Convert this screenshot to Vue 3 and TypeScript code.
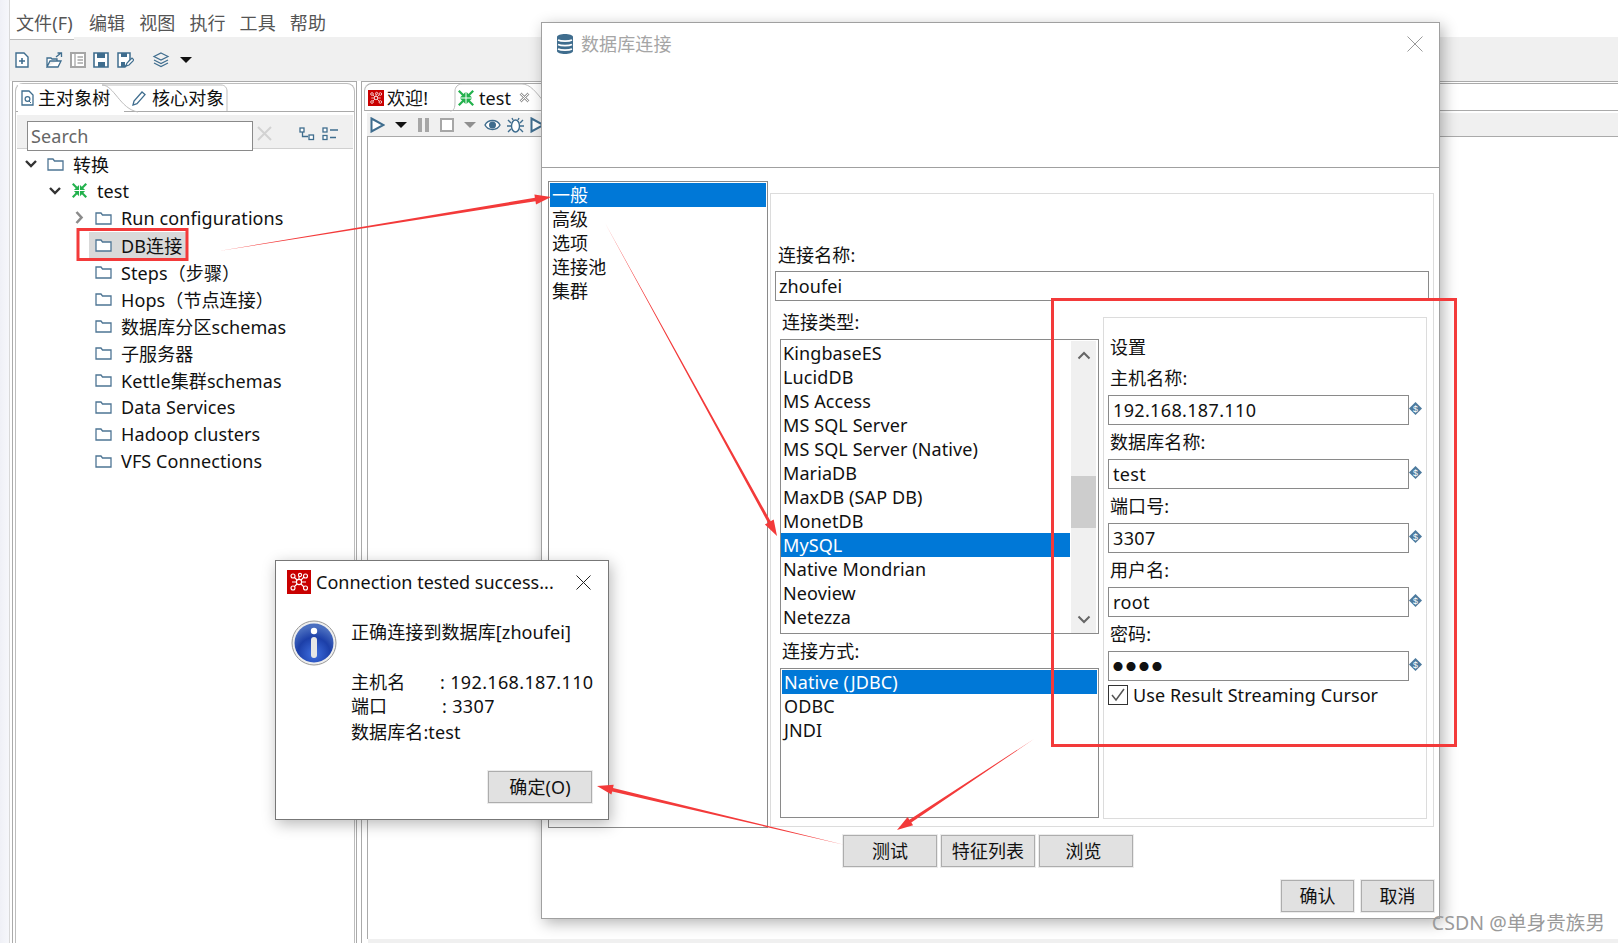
<script setup lang="ts">
const menus = ['文件(F)', '编辑', '视图', '执行', '工具', '帮助']
const tree = [
  { t: '转换', d: 'd0', tw: 'open', ic: 'folder' },
  { t: 'test', d: 'd1', tw: 'open', ic: 'trans' },
  { t: 'Run configurations', d: 'd2', tw: 'closed', ic: 'folder' },
  { t: 'DB连接', d: 'd2', tw: '', ic: 'folder', sel: true },
  { t: 'Steps（步骤）', d: 'd2', tw: '', ic: 'folder' },
  { t: 'Hops（节点连接）', d: 'd2', tw: '', ic: 'folder' },
  { t: '数据库分区schemas', d: 'd2', tw: '', ic: 'folder' },
  { t: '子服务器', d: 'd2', tw: '', ic: 'folder' },
  { t: 'Kettle集群schemas', d: 'd2', tw: '', ic: 'folder' },
  { t: 'Data Services', d: 'd2', tw: '', ic: 'folder' },
  { t: 'Hadoop clusters', d: 'd2', tw: '', ic: 'folder' },
  { t: 'VFS Connections', d: 'd2', tw: '', ic: 'folder' },
]
const navs = ['一般', '高级', '选项', '连接池', '集群']
const types = ['KingbaseES', 'LucidDB', 'MS Access', 'MS SQL Server', 'MS SQL Server (Native)', 'MariaDB', 'MaxDB (SAP DB)', 'MonetDB', 'MySQL', 'Native Mondrian', 'Neoview', 'Netezza']
const methods = ['Native (JDBC)', 'ODBC', 'JNDI']
const fields = [
  { l: '主机名称:', v: '192.168.187.110' },
  { l: '数据库名称:', v: 'test' },
  { l: '端口号:', v: '3307' },
  { l: '用户名:', v: 'root' },
  { l: '密码:', v: '●●●●', pw: true },
]
function arrow(x1: number, y1: number, x2: number, y2: number, w: number, hl: number, hw: number): string {
  const len = Math.hypot(x2 - x1, y2 - y1)
  const ux = (x2 - x1) / len
  const uy = (y2 - y1) / len
  const nx = -uy
  const ny = ux
  const bx = x2 - ux * hl
  const by = y2 - uy * hl
  const pts: [number, number][] = [
    [x1, y1],
    [bx + (nx * w) / 2, by + (ny * w) / 2],
    [bx + nx * hw, by + ny * hw],
    [x2, y2],
    [bx - nx * hw, by - ny * hw],
    [bx - (nx * w) / 2, by - (ny * w) / 2],
  ]
  return pts.map((p) => p[0].toFixed(1) + ',' + p[1].toFixed(1)).join(' ')
}
const arrows = [
  arrow(219, 251, 551, 197, 3.5, 16, 5),
  arrow(605, 223, 777, 536, 3, 16, 5),
  arrow(1034, 739, 897, 830, 3.5, 16, 5),
  arrow(845, 845, 597, 786, 3.5, 16, 5),
]
</script>

<template>
  <div class="desk">
    <svg class="defs" width="0" height="0">
      <defs>
        <symbol id="folder" viewBox="0 0 17 14">
          <path d="M1 2.500h5l1.500 2H16v9H1z" fill="#fff" stroke="#4e7594" stroke-width="1.300" />
        </symbol>
        <g id="corner">
          <path d="M7.500 7.500H2L7.500 2z" fill="#22b14c" />
          <path d="M.8.800l4.500 4.500" stroke="#22b14c" stroke-width="2.200" />
        </g>
        <symbol id="trans" viewBox="0 0 16 16">
          <use href="#corner" />
          <use href="#corner" transform="translate(16 0) scale(-1 1)" />
          <use href="#corner" transform="translate(0 16) scale(1 -1)" />
          <use href="#corner" transform="translate(16 16) scale(-1 -1)" />
        </symbol>
        <symbol id="logo" viewBox="0 0 24 24">
          <rect width="24" height="24" fill="#c90000" />
          <g stroke="#fff" stroke-width="1.100" fill="#c90000">
            <path d="M6 6l6 6M12 5v7M18 6l-6 6M6 18l6-6M18 18l-6-6M5 12h14" fill="none" />
            <circle cx="6" cy="6" r="2" />
            <circle cx="13" cy="5" r="1.600" />
            <circle cx="18.500" cy="6" r="2" />
            <circle cx="12" cy="12" r="2.600" />
            <circle cx="6" cy="18" r="2" />
            <circle cx="18.500" cy="18" r="2" />
          </g>
        </symbol>
        <symbol id="var" viewBox="0 0 14 14">
          <path d="M7 0l7 7-7 7-7-7z" fill="#4d7a9e" />
          <text x="7" y="10.400" font-size="9.500" font-family="Liberation Sans" fill="#fff" text-anchor="middle">$</text>
        </symbol>
      </defs>
    </svg>

    <div class="main">
      <div class="menu">
        <span v-for="m in menus" :key="m" class="menu-item">{{ m }}</span>
      </div>
      <div class="toolbar">
        <svg width="14" height="16" viewBox="0 0 14 16"><path d="M1 1h8l4 4v10H1z" fill="#fff" stroke="#3f6d8e" stroke-width="1.400" /><path d="M7 6v6M4 9h6" stroke="#3f6d8e" stroke-width="1.600" /></svg>
        <svg class="t2" width="17" height="16" viewBox="0 0 17 16"><path d="M1 15V6h4l1 1h5v2M1 15h11l3-6H4z" fill="#fff" stroke="#3f6d8e" stroke-width="1.300" /><path d="M10 5l5-4M11.500 1H15.500V5" fill="none" stroke="#3f6d8e" stroke-width="1.300" /></svg>
        <svg class="t3" width="16" height="16" viewBox="0 0 16 16"><rect x="1" y="1" width="14" height="14" fill="#fff" stroke="#a6a6a6" stroke-width="2" /><path d="M5 1v14M7.500 5H13M7.500 8H13M7.500 11H13" stroke="#a6a6a6" stroke-width="1.300" /></svg>
        <svg class="t3" width="16" height="16" viewBox="0 0 16 16"><path d="M1 1h14v14H1z" fill="#fff" stroke="#3f6d8e" stroke-width="1.600" /><path d="M4 1h8v5H4zM5 10h7v5H5z" fill="#3f6d8e" /></svg>
        <svg class="t3b" width="17" height="16" viewBox="0 0 17 16"><path d="M1 1h12v7l-5 7H1z" fill="#fff" stroke="#3f6d8e" stroke-width="1.500" /><path d="M4 1h6v4H4zM4 10h4v5H4z" fill="#3f6d8e" /><path d="M9 14l1-3 5-5 2 2-5 5z" fill="#fff" stroke="#3f6d8e" stroke-width="1.200" /></svg>
        <svg class="t4" width="18" height="16" viewBox="0 0 18 16"><g fill="none" stroke="#3f6d8e" stroke-width="1.200"><path d="M9 1l7 3.500L9 8 2 4.500z" /><path d="M2 8l7 3.500L16 8" /><path d="M2 11l7 3.500 7-3.500" /></g></svg>
        <span class="tri t5"></span>
      </div>

      <div class="panes">
        <section class="pane-left">
          <div class="frame">
            <div class="tabs">
              <div class="tab tab-a">
                <svg width="13" height="16" viewBox="0 0 13 16"><path d="M1 1h7l4 4v10H1z" fill="#fff" stroke="#3f6d8e" stroke-width="1.300" /><circle cx="6.500" cy="9" r="2.400" fill="none" stroke="#3f6d8e" stroke-width="1.200" /><path d="M8 11l2 2" stroke="#3f6d8e" /></svg>
                <span>主对象树</span>
              </div>
              <div class="tab tab-b">
                <svg width="15" height="16" viewBox="0 0 15 16"><path d="M1 15l1-4 8-9 3 2.600-8 9z" fill="#fff" stroke="#3f6d8e" stroke-width="1.300" /></svg>
                <span>核心对象</span>
              </div>
              <svg class="tab-curve" width="240" height="29" viewBox="0 0 240 29"><path d="M86 1c12 0 18 24 36 27M86 1h119c4 0 6 3 6 6v20" fill="none" stroke="#bdbdbd" stroke-width="1" /></svg>
            </div>
            <div class="tree-bar">
              <div class="search">Search</div>
              <svg class="sx" width="15" height="15" viewBox="0 0 15 15"><path d="M1 1l13 13M14 1L1 14" stroke="#d2d2d2" stroke-width="2" /></svg>
              <svg class="sy" width="16" height="14" viewBox="0 0 16 14"><g fill="#fff" stroke="#3f6d8e" stroke-width="1.300"><path d="M3.500 4v5.500H9" fill="none" /><rect x="1" y="1" width="4" height="4" /><rect x="10" y="8" width="4.500" height="4.500" /></g></svg>
              <svg class="sz" width="17" height="14" viewBox="0 0 17 14"><g fill="#fff" stroke="#3f6d8e" stroke-width="1.300"><rect x="1" y="1" width="4" height="4" /><rect x="1" y="8.500" width="4" height="4" /><path d="M8 3h8M8 10.500h6" /></g></svg>
            </div>
            <div class="tree">
              <div v-for="r in tree" :key="r.t" class="row" :class="r.d">
                <span class="twist">
                  <svg v-if="r.tw === 'open'" width="12" height="8" viewBox="0 0 12 8"><path d="M1 1l5 5 5-5" fill="none" stroke="#333" stroke-width="2.400" /></svg>
                  <svg v-else-if="r.tw === 'closed'" width="9" height="13" viewBox="0 0 9 13"><path d="M1.500 1l5 5.500-5 5.500" fill="none" stroke="#8b8b8b" stroke-width="2.600" /></svg>
                </span>
                <span class="node" :class="{ sel: r.sel }">
                  <svg class="nic" width="17" height="15"><use :href="'#' + r.ic" /></svg>
                  <span>{{ r.t }}</span>
                </span>
              </div>
            </div>
          </div>
        </section>

        <section class="pane-right">
          <div class="tabs2">
            <div class="tab2 welcome">
              <svg width="16" height="16"><use href="#logo" /></svg>
              <span>欢迎!</span>
            </div>
            <div class="tab2 active">
              <svg width="16" height="16"><use href="#trans" /></svg>
              <span>test</span>
              <svg class="tclose" width="11" height="11" viewBox="0 0 11 11"><path d="M1.500 1.500l8 8M9.500 1.500l-8 8" stroke="#999" stroke-width="2.600" /><path d="M1.500 1.500l8 8M9.500 1.500l-8 8" stroke="#fff" stroke-width="1" /></svg>
            </div>
            <svg class="tab-curve2" width="110" height="29" viewBox="0 0 110 29"><path d="M0 28c4 0 5-3 5-9V8c0-4 3-7 7-7h60c8 0 14 8 22 18" fill="none" stroke="#bdbdbd" /></svg>
          </div>
          <div class="run-bar">
            <svg class="r1" width="15" height="16" viewBox="0 0 15 16"><path d="M1.500 1.500l12 6.500-12 6.500z" fill="#fff" stroke="#3f6d8e" stroke-width="2" /></svg>
            <span class="tri r2"></span>
            <svg class="r3" width="11" height="14" viewBox="0 0 11 14"><path d="M0 0h4v14H0zM7 0h4v14H7z" fill="#a6a6a6" /></svg>
            <svg class="r4" width="14" height="14" viewBox="0 0 14 14"><rect x="1" y="1" width="12" height="12" fill="#fff" stroke="#a6a6a6" stroke-width="2" /></svg>
            <span class="tri gray r5"></span>
            <svg class="r6" width="17" height="12" viewBox="0 0 17 12"><path d="M1 6c3-6 12-6 15 0-3 6-12 6-15 0z" fill="#fff" stroke="#3f6d8e" stroke-width="1.400" /><circle cx="8.500" cy="6" r="3.500" fill="#3f6d8e" /></svg>
            <svg class="r7" width="17" height="16" viewBox="0 0 17 16"><g stroke="#3f6d8e" stroke-width="1.400" fill="none"><ellipse cx="8.500" cy="9" rx="4" ry="6" fill="#fff" /><path d="M4 6L1 3M13 6l3-3M4 9H0M13 9h4M4 12l-3 3M13 12l3 3M6 3L5 1M11 3l1-2" /></g></svg>
            <svg class="r8" width="15" height="16" viewBox="0 0 15 16"><path d="M1.500 1.500l12 6.500-12 6.500z" fill="#fff" stroke="#3f6d8e" stroke-width="2" /></svg>
          </div>
          <div class="canvas"></div>
          <div class="status"></div>
        </section>
      </div>
    </div>

    <div class="dialog">
      <header class="dlg-head">
        <div class="dlg-title">
          <svg width="18" height="22" viewBox="0 0 18 22"><path d="M1 4c0-4 16-4 16 0v14c0 4-16 4-16 0z" fill="#3f6d8e" /><path d="M2 7c3 1.500 11 1.500 14 0M2 11.500c3 1.500 11 1.500 14 0M2 16c3 1.500 11 1.500 14 0" fill="none" stroke="#fff" stroke-width="1.600" /></svg>
          <span>数据库连接</span>
        </div>
        <svg class="dlg-x" width="16" height="16" viewBox="0 0 16 16"><path d="M.5.500l15 15M15.500.500l-15 15" stroke="#9a9a9a" stroke-width="1" /></svg>
      </header>
      <div class="dlg-body">
        <div class="nav">
          <div v-for="(n, i) in navs" :key="n" class="li" :class="{ on: i === 0 }">{{ n }}</div>
        </div>
        <div class="group">
          <div class="name-label">连接名称:</div>
          <div class="input name-input">zhoufei</div>
          <div class="split">
            <div class="col">
              <div class="lab-a">连接类型:</div>
              <div class="types">
                <div class="types-list">
                  <div v-for="t in types" :key="t" class="li" :class="{ on: t === 'MySQL' }">{{ t }}</div>
                </div>
                <div class="scroll">
                  <svg class="sup" width="14" height="9" viewBox="0 0 14 9"><path d="M1.500 7.500L7 2l5.500 5.500" fill="none" stroke="#666" stroke-width="2" /></svg>
                  <div class="thumb"></div>
                  <svg class="sdown" width="14" height="9" viewBox="0 0 14 9"><path d="M1.500 1.500L7 7l5.500-5.500" fill="none" stroke="#666" stroke-width="2" /></svg>
                </div>
              </div>
              <div class="lab-b">连接方式:</div>
              <div class="methods">
                <div v-for="(t, i) in methods" :key="t" class="li" :class="{ on: i === 0 }">{{ t }}</div>
              </div>
            </div>
            <div class="settings">
              <div class="set-title">设置</div>
              <div v-for="f in fields" :key="f.l" class="field">
                <div class="field-label">{{ f.l }}</div>
                <div class="field-row">
                  <div class="input field-input" :class="{ pw: f.pw }">{{ f.v }}</div>
                  <svg class="var" width="13" height="13"><use href="#var" /></svg>
                </div>
              </div>
              <label class="check">
                <span class="box"><svg width="16" height="14" viewBox="0 0 16 14"><path d="M2 7l4 5 8-11" fill="none" stroke="#555" stroke-width="1.500" /></svg></span>
                <span>Use Result Streaming Cursor</span>
              </label>
            </div>
          </div>
        </div>
      </div>
      <div class="test-row">
        <button class="btn">测试</button>
        <button class="btn">特征列表</button>
        <button class="btn browse">浏览</button>
      </div>
      <div class="ok-row">
        <button class="btn small">确认</button>
        <button class="btn small">取消</button>
      </div>
    </div>

    <div class="msg">
      <header class="msg-head">
        <svg width="24" height="24"><use href="#logo" /></svg>
        <span>Connection tested success...</span>
        <svg class="msg-x" width="15" height="15" viewBox="0 0 15 15"><path d="M.5.500l14 14M14.500.500l-14 14" stroke="#222" stroke-width="1" /></svg>
      </header>
      <div class="msg-body">
        <svg class="info" width="46" height="46" viewBox="0 0 46 46">
          <defs>
            <radialGradient id="ig" cx="50%" cy="78%" r="70%">
              <stop offset="0" stop-color="#3f6fe0" />
              <stop offset="0.6" stop-color="#1c3fa8" />
              <stop offset="1" stop-color="#4b6fc0" />
            </radialGradient>
          </defs>
          <circle cx="23" cy="23" r="22" fill="#eee" stroke="#999" />
          <circle cx="23" cy="23" r="19.500" fill="url(#ig)" />
          <circle cx="23" cy="11" r="3.200" fill="#fff" />
          <rect x="20" y="17" width="6" height="21" rx="3" fill="#e6e6e6" />
        </svg>
        <div class="msg-text">
          <div class="m-first">正确连接到数据库[zhoufei]</div>
          <div class="m-line"><span class="k">主机名</span><span class="val">: 192.168.187.110</span></div>
          <div class="m-line"><span class="k k2">端口</span><span class="val">: 3307</span></div>
          <div class="m-line m-last">数据库名:test</div>
        </div>
      </div>
      <div class="msg-foot"><button class="btn msg-btn">确定(O)</button></div>
    </div>

    <svg class="marks" width="1618" height="943" viewBox="0 0 1618 943">
      <rect x="78" y="229.500" width="109" height="30" fill="none" stroke="#f33a3a" stroke-width="3" />
      <rect x="1052.500" y="299.500" width="403" height="446" fill="none" stroke="#f33a3a" stroke-width="3" />
      <polygon v-for="(p, i) in arrows" :key="i" :points="p" fill="#f33a3a" />
    </svg>

    <div class="watermark">CSDN @单身贵族男</div>
  </div>
</template>

<style scoped>
.desk {
  position: relative;
  width: 1618px;
  height: 943px;
  overflow: hidden;
  background: linear-gradient(90deg, #eff0f6, #f6f7fb 9px, #fff 9px);
  font-family: "Noto Sans", "Noto Sans CJK SC", sans-serif;
  font-size: 18px;
  letter-spacing: 0.1px;
  color: #111;
}
.defs { position: absolute; }
.main {
  margin-left: 9px;
  height: 943px;
  display: flex;
  flex-direction: column;
  background: #fff;
  border-left: 1px solid #d8d8d8;
}
.menu {
  height: 37px;
  display: flex;
  gap: 14px;
  padding: 11px 0 0 6px;
  box-sizing: border-box;
  line-height: 24px;
  color: #555;
  position: relative;
}
.menu-item:first-child { min-width: 59px; }
.menu::after {
  content: "";
  position: absolute;
  left: 0;
  top: 37px;
  width: 64px;
  height: 2px;
  background: #fff;
  border-bottom: 1px solid #bbb;
}
.toolbar {
  height: 44px;
  background: #f0f0f0;
  display: flex;
  align-items: center;
  padding-left: 5px;
  padding-top: 2px;
  box-sizing: border-box;
}
.t2 { margin-left: 17px; }
.t3 { margin-left: 7px; }
.t3b { margin-left: 8px; }
.t4 { margin-left: 18px; }
.t5 { margin-left: 10px; }
.tri {
  display: inline-block;
  width: 0;
  height: 0;
  border-left: 6px solid transparent;
  border-right: 6px solid transparent;
  border-top: 6px solid #111;
}
.tri.gray { border-top-color: #8f8f8f; }
.panes {
  flex: 1;
  display: flex;
  min-height: 0;
}
.pane-left {
  margin-left: 2px;
  width: 345px;
  border: 1px solid #aaa;
  border-bottom: 0;
  box-sizing: border-box;
  padding: 1px 1px 0 2px;
  display: flex;
}
.frame {
  flex: 1;
  border: 1px solid #bdbdbd;
  border-bottom: 0;
  border-radius: 8px 8px 0 0;
  min-width: 0;
}
.tabs {
  position: relative;
  height: 27px;
  border-bottom: 1px solid #aaa;
  display: flex;
  box-sizing: content-box;
}
.tab {
  display: flex;
  align-items: center;
  line-height: 26px;
  color: #111;
}
.tab-a {
  margin: 0 0 -1px 2px;
  padding-left: 3px;
  width: 106px;
  box-sizing: border-box;
  gap: 4px;
  background: #fff;
}
.tab-b { margin-left: 8px; gap: 5px; }
.tab-curve {
  position: absolute;
  left: 0;
  top: 0;
}
.tree-bar {
  margin: 3px 1px 0 1px;
  height: 33px;
  background: #f0f0f0;
  border-bottom: 1px solid #d0d0d0;
  display: flex;
  align-items: flex-start;
  box-sizing: content-box;
}
.search {
  margin: 6px 0 0 10px;
  width: 226px;
  height: 30px;
  box-sizing: border-box;
  border: 1px solid #8a8a8a;
  background: #fff;
  padding-left: 3px;
  line-height: 28px;
  color: #666;
}
.sx { margin: 11px 0 0 4px; }
.sy { margin: 12px 0 0 27px; }
.sz { margin: 12px 0 0 7px; }
.tree { margin-top: 1px; }
.row {
  height: 27px;
  display: flex;
  align-items: center;
  white-space: nowrap;
}
.d0 { padding-left: 9px; }
.d1 { padding-left: 33px; }
.d2 { padding-left: 57px; }
.twist {
  width: 12px;
  margin-right: 4px;
  display: flex;
  align-items: center;
  justify-content: center;
}
.node {
  display: flex;
  align-items: center;
  height: 26px;
  padding: 0 4px 0 6px;
  gap: 9px;
}
.nic { flex: none; }
.node.sel { background: #d9d9d9; }
.pane-right {
  flex: 1;
  margin-left: 4px;
  min-width: 0;
  display: flex;
  flex-direction: column;
  border-left: 1px solid #aaa;
  border-top: 1px solid #aaa;
  padding-top: 1px;
  position: relative;
}
.tabs2 {
  position: relative;
  height: 28px;
  margin-left: 2px;
  border-top: 1px solid #aaa;
  border-bottom: 1px solid #aaa;
  border-left: 1px solid #bdbdbd;
  border-top-left-radius: 8px;
  display: flex;
  box-sizing: border-box;
}
.tab2 {
  display: flex;
  align-items: center;
  gap: 3px;
  line-height: 26px;
  padding-top: 1px;
}
.welcome { margin-left: 3px; width: 90px; }
.active { margin-left: 0; gap: 5px; }
.tclose { margin-left: 3px; }
.tab-curve2 {
  position: absolute;
  left: 85px;
  top: -1px;
}
.run-bar {
  margin: 2px 0 0 5px;
  height: 22px;
  padding-top: 1px;
  background: #f0f0f0;
  border-bottom: 1px solid #aaa;
  display: flex;
  align-items: center;
  box-sizing: content-box;
}
.r1 { margin-left: 3px; }
.r2 { margin-left: 10px; }
.r3 { margin-left: 11px; }
.r4 { margin-left: 11px; }
.r5 { margin-left: 10px; }
.r6 { margin-left: 8px; }
.r7 { margin-left: 6px; }
.r8 { margin-left: 6px; }
.canvas {
  flex: 1;
  margin-left: 5px;
  border-left: 1px solid #aaa;
}
.status {
  height: 4px;
  margin-left: 6px;
  background: #f0f0f0;
}

.dialog {
  position: absolute;
  left: 541px;
  top: 22px;
  width: 899px;
  height: 897px;
  box-sizing: border-box;
  background: #fff;
  border: 1px solid #a0a0a0;
  box-shadow: 3px 4px 14px rgba(0, 0, 0, 0.3);
  display: flex;
  flex-direction: column;
}
.dlg-head {
  height: 145px;
  flex: none;
  box-sizing: border-box;
  border-bottom: 1px solid #a0a0a0;
  position: relative;
}
.dlg-title {
  display: flex;
  align-items: center;
  gap: 7px;
  padding: 9px 0 0 14px;
  color: #a5a5a5;
  line-height: 24px;
}
.dlg-x {
  position: absolute;
  right: 16px;
  top: 13px;
}
.dlg-body {
  flex: none;
  display: flex;
  gap: 2px;
  padding: 13px 0 0 6px;
  align-items: flex-start;
}
.nav {
  width: 220px;
  height: 647px;
  box-sizing: border-box;
  border: 1px solid #8a8a8a;
  padding: 1px;
  background: #fff;
}
.li {
  height: 24px;
  line-height: 24px;
  padding-left: 2px;
  white-space: nowrap;
}
.li.on {
  background: #0078d7;
  color: #fff;
}
.group {
  margin-top: 12px;
  width: 664px;
  height: 634px;
  box-sizing: border-box;
  border: 1px solid #dcdcdc;
}
.name-label {
  margin-top: 47px;
  padding-left: 7px;
  line-height: 28px;
  height: 30px;
}
.input {
  box-sizing: border-box;
  height: 30px;
  border: 1px solid #8a8a8a;
  background: #fff;
  line-height: 28px;
  padding-left: 3px;
  white-space: nowrap;
}
.name-input {
  margin-left: 4px;
  width: 654px;
}
.split {
  display: flex;
  gap: 4px;
  margin-left: 9px;
}
.col { width: 319px; }
.lab-a {
  padding: 9px 0 5px 2px;
  line-height: 24px;
}
.lab-b {
  padding: 5px 0 5px 2px;
  line-height: 24px;
}
.types {
  height: 295px;
  box-sizing: border-box;
  border: 1px solid #8a8a8a;
  display: flex;
  padding: 1px 2px 0 0;
}
.types-list { flex: 1; min-width: 0; }
.scroll {
  width: 25px;
  flex: none;
  background: #f0f0f0;
  position: relative;
  margin-left: 1px;
  display: flex;
  flex-direction: column;
  align-items: center;
}
.sup { margin-top: 10px; }
.thumb {
  width: 100%;
  height: 52px;
  background: #cdcdcd;
  margin-top: 116px;
}
.sdown { margin-top: 87px; }
.methods {
  height: 150px;
  box-sizing: border-box;
  border: 1px solid #8a8a8a;
  padding: 1px 1px 0;
}
.methods .li { padding-left: 2px; }
.settings {
  margin-top: 16px;
  width: 324px;
  height: 502px;
  box-sizing: border-box;
  border: 1px solid #dcdcdc;
  padding: 17px 0 0 4px;
}
.set-title {
  line-height: 24px;
  height: 26px;
  padding-left: 2px;
}
.field-label {
  height: 34px;
  line-height: 34px;
  padding-left: 2px;
}
.field-row {
  display: flex;
  align-items: center;
}
.field-input {
  width: 301px;
  padding-left: 4px;
  letter-spacing: 0.35px;
}
.field-input.pw {
  font-size: 10px;
  letter-spacing: 3px;
  line-height: 31px;
}
.var { margin: -4px 0 0 0; }
.check {
  display: flex;
  align-items: center;
  gap: 5px;
  margin-top: 4px;
  height: 20px;
}
.box {
  width: 20px;
  height: 20px;
  box-sizing: border-box;
  border: 1px solid #333;
  display: flex;
  align-items: center;
  justify-content: center;
}
.btn {
  font: inherit;
  letter-spacing: inherit;
  color: #111;
  background: #e1e1e1;
  border: 1px solid #adadad;
  outline: 1px solid #ececec;
  padding: 0;
  width: 94px;
  height: 32px;
  line-height: 28px;
}
.btn.browse { padding-right: 5px; }
.test-row {
  display: flex;
  gap: 4px;
  margin: 7px 0 0 301px;
}
.ok-row {
  display: flex;
  gap: 7px;
  justify-content: flex-end;
  margin: 13px 5px 0 0;
}
.btn.small { width: 73px; }

.msg {
  position: absolute;
  left: 275px;
  top: 560px;
  width: 334px;
  height: 260px;
  box-sizing: border-box;
  background: #fff;
  border: 1px solid #777;
  box-shadow: 2px 4px 14px rgba(0, 0, 0, 0.28);
  display: flex;
  flex-direction: column;
}
.msg-head {
  height: 42px;
  flex: none;
  display: flex;
  align-items: center;
  gap: 5px;
  padding-left: 11px;
  position: relative;
  white-space: nowrap;
  letter-spacing: 0;
}
.msg-x {
  position: absolute;
  right: 17px;
  top: 14px;
}
.msg-body {
  display: flex;
  padding: 17px 0 0 15px;
}
.info { flex: none; margin-right: 14px; }
.m-first {
  line-height: 24px;
  margin-bottom: 26px;
  white-space: nowrap;
}
.m-line {
  line-height: 24px;
  white-space: nowrap;
  display: flex;
}
.m-last { margin-top: 2px; }
.val { letter-spacing: 0.35px; }
.k { width: 89px; }
.k2 { width: 91px; }
.msg-foot {
  margin-top: auto;
  padding: 0 16px 16px 0;
  display: flex;
  justify-content: flex-end;
}
.btn.msg-btn { width: 104px; }

.marks {
  position: absolute;
  left: 0;
  top: 0;
  pointer-events: none;
}
.watermark {
  position: absolute;
  right: 13px;
  top: 910px;
  line-height: 26px;
  font-size: 19.5px;
  color: #9a9a9a;
  white-space: nowrap;
}
</style>
